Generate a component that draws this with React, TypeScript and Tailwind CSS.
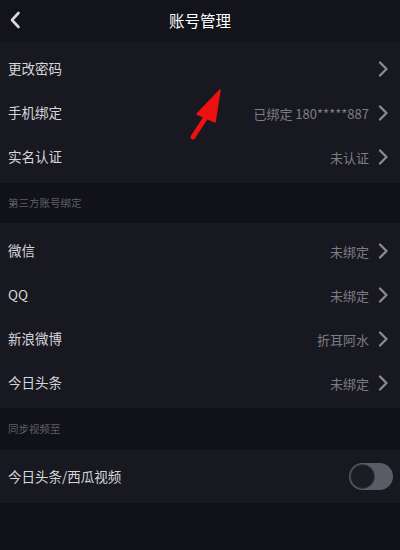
import React from 'react';

const font = { fontFamily: '"Noto Sans CJK SC", "Noto Sans", sans-serif' };

const Chevron = () => (
    <svg width="10" height="16" viewBox="0 0 10 16" className="shrink-0">
        <path d="M2 1.5 L8.5 8 L2 14.5" fill="none" stroke="#8c8c94" strokeWidth="2.2" strokeLinecap="round" strokeLinejoin="round" />
    </svg>
);

interface RowProps {
    label: string;
    value?: string;
}

const Row: React.FC<RowProps> = ({ label, value }) => (
    <div className="h-[44px] flex items-center justify-between pl-2 pr-[12px] leading-none">
        <span className="text-[13.5px] text-[#d6d6da]">{label}</span>
        <div className="flex items-center gap-[9px]">
            {value && <span className="text-[13px] text-[#7c7c84]">{value}</span>}
            <Chevron />
        </div>
    </div>
);

const GroupTitle: React.FC<{ title: string; h: string }> = ({ title, h }) => (
    <div className={`${h} flex items-center pl-2 bg-[#111118] leading-none`}>
        <span className="text-[10.5px] text-[#5f5f68]">{title}</span>
    </div>
);

export default function App() {
    return (
        <div className="relative w-[400px] h-[550px] bg-[#111118] overflow-hidden" style={font}>
            {/* Header */}
            <div className="relative h-[42px] flex items-center justify-center bg-[#13131b] leading-none">
                <svg width="12" height="18" viewBox="0 0 12 18" className="absolute left-[9px] top-[11px]">
                    <path d="M9.5 2 L3 9 L9.5 16" fill="none" stroke="#d8d8dc" strokeWidth="2.6" strokeLinecap="round" strokeLinejoin="round" />
                </svg>
                <span className="text-[15.5px] text-white">账号管理</span>
            </div>

            {/* Account */}
            <div className="bg-[#181821] pt-[5px] pb-[4px]">
                <Row label="更改密码" />
                <Row label="手机绑定" value="已绑定 180*****887" />
                <Row label="实名认证" value="未认证" />
            </div>

            <GroupTitle title="第三方账号绑定" h="h-[40px]" />

            <div className="bg-[#181821] pt-[6px] pb-[3px]">
                <Row label="微信" value="未绑定" />
                <Row label="QQ" value="未绑定" />
                <Row label="新浪微博" value="折耳阿水" />
                <Row label="今日头条" value="未绑定" />
            </div>

            <GroupTitle title="同步视频至" h="h-[42px]" />

            <div className="bg-[#181821] h-[53px] flex items-center justify-between pl-2 pr-[7px] leading-none">
                <span className="text-[13.5px] text-[#d6d6da]">今日头条/西瓜视频</span>
                <div className="w-[44px] h-[27px] rounded-full bg-[#5c5c66] flex items-center p-[1px]">
                    <div className="w-[25px] h-[25px] rounded-full bg-[#1c1c25] border border-[#3a3a44]" />
                </div>
            </div>

            {/* Red annotation arrow */}
            <svg width="50" height="60" viewBox="0 0 50 60" className="absolute left-[185px] top-[85px]">
                <path d="M21 32 L8 52" stroke="#ee1111" strokeWidth="5" strokeLinecap="round" />
                <path d="M35 5 L12 29 L30 37 Z" fill="#ee1111" strokeLinejoin="round" stroke="#ee1111" strokeWidth="1.5" />
            </svg>
        </div>
    );
}
